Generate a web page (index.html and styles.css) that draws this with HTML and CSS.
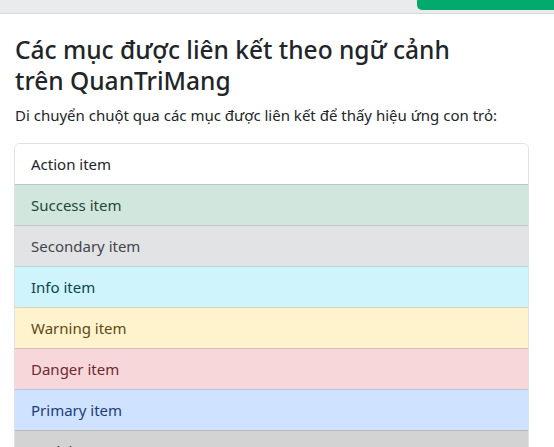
FILE: index.html
```html
<!DOCTYPE html>
<html lang="vi">
<head>
<meta charset="utf-8">
<link rel="stylesheet" href="styles.css">
</head>
<body>
<div class="topbar"><span class="run-btn"></span></div>
<main class="page">
  <h2 class="title">Các mục được liên kết theo ngữ cảnh trên QuanTriMang</h2>
  <p class="lead">Di chuyển chuột qua các mục được liên kết để thấy hiệu ứng con trỏ:</p>
  <div class="list-group">
    <a class="item item-action">Action item</a>
    <a class="item item-success">Success item</a>
    <a class="item item-secondary">Secondary item</a>
    <a class="item item-info">Info item</a>
    <a class="item item-warning">Warning item</a>
    <a class="item item-danger">Danger item</a>
    <a class="item item-primary">Primary item</a>
    <a class="item item-dark">Dark item</a>
  </div>
</main>
</body>
</html>
```
FILE: styles.css
```css
html, body {
  margin: 0;
  padding: 0;
  background: #fff;
  font-family: "Noto Sans", "Open Sans", sans-serif;
  color: #212529;
  overflow: hidden;
}
.topbar {
  height: 13px;
  background: #e9ebed;
  border-bottom: 1px solid #d6d8da;
  display: flex;
  justify-content: flex-end;
  overflow: hidden;
}
.run-btn {
  width: 137px;
  height: 10px;
  background: #04aa6d;
  border-radius: 0 0 0 5px;
}
.page {
  padding: 0 25px 0 14px;
}
.title {
  margin: 20px 0 0 1px;
  font-size: 24.5px;
  font-weight: 500;
  line-height: 31px;
  color: #212529;
  max-width: 470px;
}
.lead {
  margin: 8px 0 17px 1px;
  font-size: 15px;
  line-height: 22px;
}
.list-group {
  display: flex;
  flex-direction: column;
  border: 1px solid #dfe1e3;
  border-radius: 6px;
  overflow: hidden;
  width: 513px;
}
.item {
  display: block;
  padding: 0 16px;
  height: 40px;
  line-height: 40px;
  font-size: 15px;
  border-top: 1px solid rgba(0,0,0,0.125);
  color: #212529;
}
.item:first-child { border-top: none; }
.item-action { background: #fff; color: #212529; }
.item-success { background: #d1e7dd; color: #1d4a36; }
.item-secondary { background: #e2e3e5; color: #41464b; }
.item-info { background: #cff4fc; color: #0b4452; }
.item-warning { background: #fff3cd; color: #5c4a14; }
.item-danger { background: #f8d7da; color: #6e2a2f; }
.item-primary { background: #cfe2ff; color: #1b3f7a; }
.item-dark { background: #d3d3d4; color: #141619; }
```
